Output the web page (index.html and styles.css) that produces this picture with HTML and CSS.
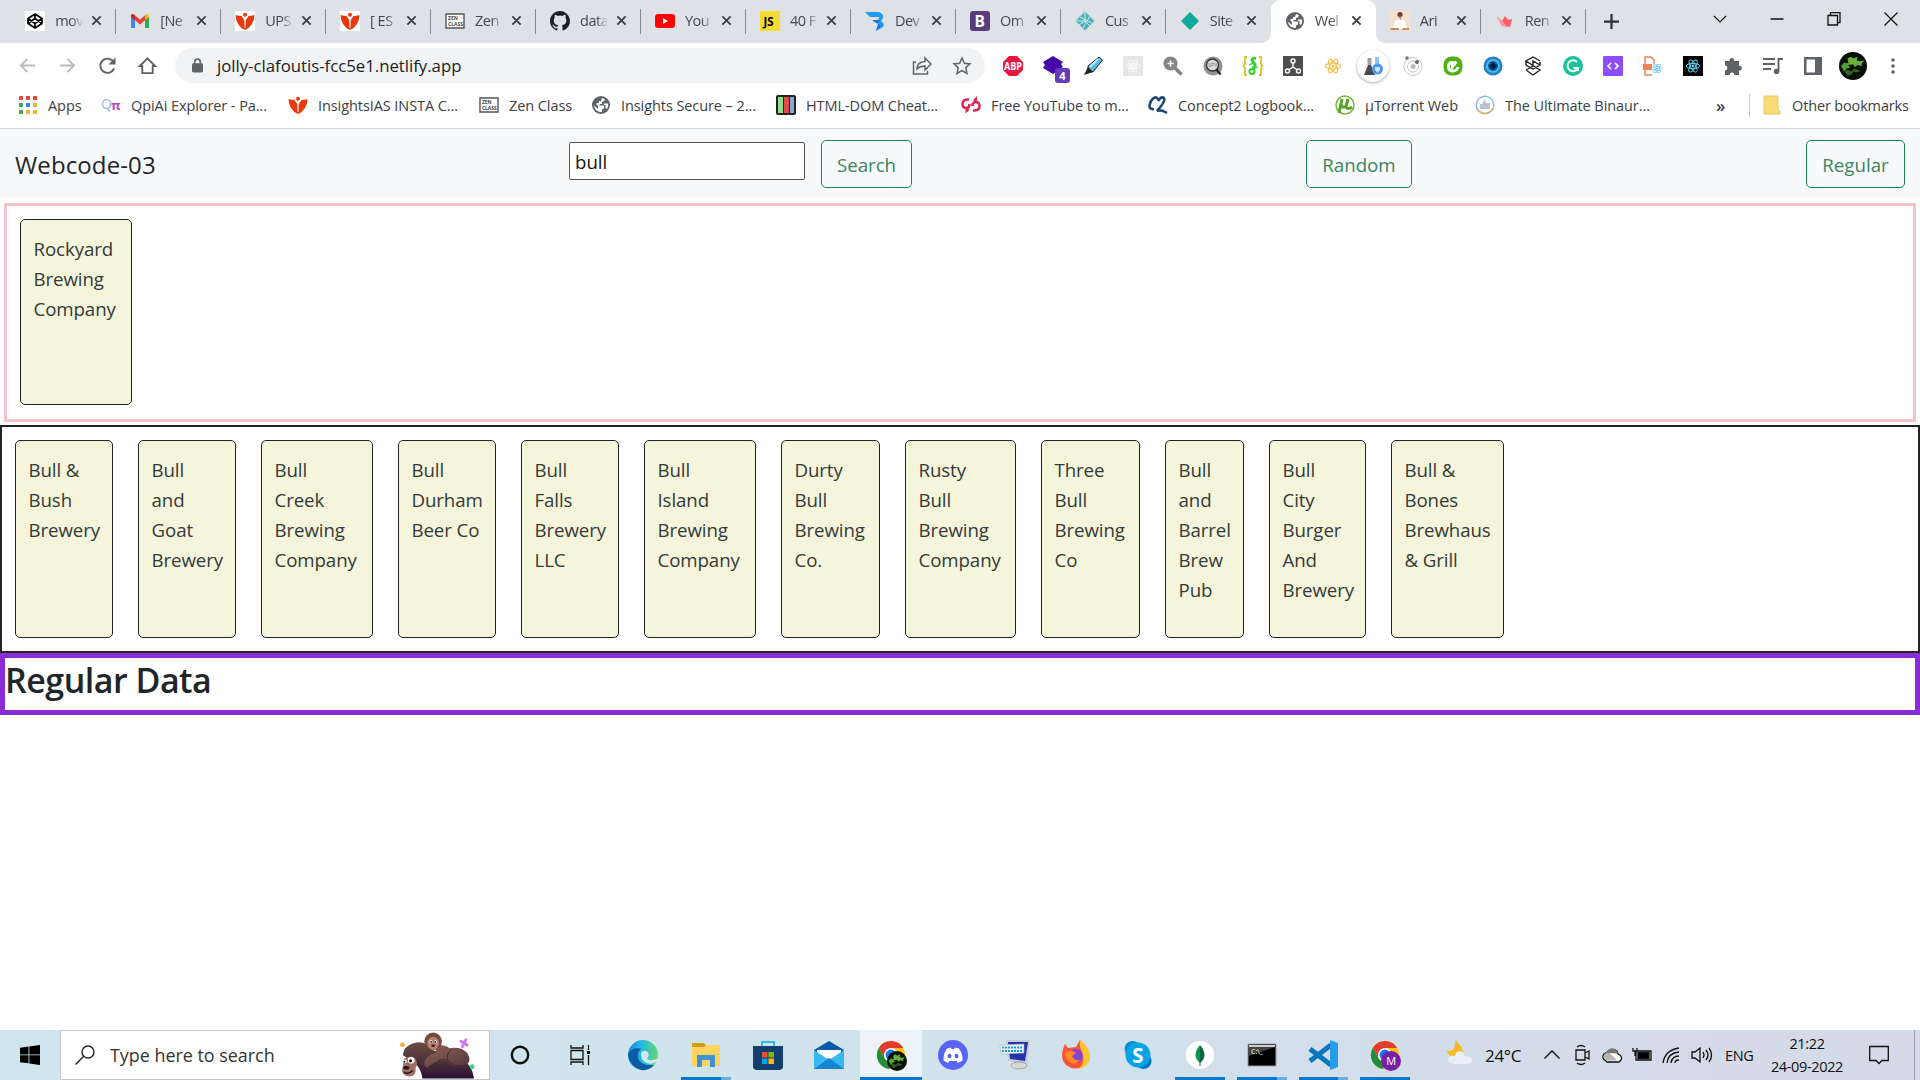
FILE: index.html
```html
<!DOCTYPE html>
<html lang="en">
<head>
<meta charset="utf-8">
<title>Webcode-03</title>
<link rel="stylesheet" href="styles.css">
</head>
<body>
<svg class="defs" aria-hidden="true">
  <defs>
    <symbol id="book" viewBox="0 0 20 20"><path fill="#e8380d" d="M.5 4q3 1 6 1l3 4.500L10 19Q1 15 .5 4zM19.500 4q-3 1-6 1l-3 4.500L10 19Q19 15 19.500 4z"/><circle cx="10" cy="3.800" r="2" fill="#e8380d"/><path stroke="#fff" stroke-width=".8" d="M10 9v8"/></symbol>
    <symbol id="zen" viewBox="0 0 20 20"><path fill="#fff" stroke="#555" stroke-width="1.400" d="M1 3h18v14H1z"/><text x="3" y="9.200" font-size="5" font-weight="700" fill="#444">ZEN</text><text x="3" y="14.500" font-size="5" font-weight="700" fill="#444">CLASS</text></symbol>
    <symbol id="globe" viewBox="0 0 20 20"><circle cx="10" cy="10" r="9" fill="#5f6368"/><path fill="#fff" d="M11 3q2 0 3 1.500-1 2.500-3 2.500v2H8.500v1.500h4.500v3l-2 1v2.500Q4 17.500 3 10.500l4 3.500v-3L5.500 9.500V8H8V6h2zM17 8.500q1 3-1 5.500l-1.500-1V10H13V8.500z"/></symbol>
    <symbol id="atom" viewBox="0 0 20 20"><g fill="none" stroke="currentColor" stroke-width="1.200"><ellipse cx="10" cy="10" rx="8.500" ry="3.300"/><ellipse cx="10" cy="10" rx="8.500" ry="3.300" transform="rotate(60 10 10)"/><ellipse cx="10" cy="10" rx="8.500" ry="3.300" transform="rotate(120 10 10)"/></g><circle cx="10" cy="10" r="1.800" fill="currentColor"/></symbol>
    <symbol id="chrome" viewBox="0 0 32 32"><circle cx="16" cy="16" r="15" fill="#fbc116"/><path fill="#e33b2e" d="M3 8.500A15 15 0 0 1 29 8.500H16L9.500 20z"/><path fill="#1e8e3e" d="M3 8.500L9.500 20l6.500 3.500L14 31A15 15 0 0 1 3 8.500z"/><circle cx="16" cy="16" r="7.500" fill="#fff"/><circle cx="16" cy="16" r="5.800" fill="#1a73e8"/></symbol>
    <symbol id="leafy" viewBox="0 0 30 30"><circle cx="15" cy="15" r="15" fill="#061006"/><path fill="#69ad3c" d="M9 7l4-2 2 2 5-2-1 4 4 1 4-1-3 4 1 2-5-1-3 2-2-3-4 1-1-3z"/><path fill="#5a9c34" d="M2 15l4-4 2 1 4-1-2 4 3 1-5 2-3 3-1-3z"/><path fill="#2d6620" d="M5 20l5-1 3 2 3-3 4 1 3 1-4 2-3-1-3 3-4 2-1-3z"/></symbol>
    <symbol id="x" viewBox="0 0 12 12"><path stroke="#3c4043" stroke-width="2" d="M1.500 1.500l9 9M10.500 1.500l-9 9"/></symbol>
  </defs>
</svg>

<header class="chrome">
  <div class="tabstrip">
    <div class="tab"><svg class="ic" viewBox="0 0 20 20"><path fill="#fff" d="M0 0h20v20H0z"/><path fill="none" stroke="#000" stroke-width="1.700" stroke-linejoin="round" d="M10 3l7 4.500v5L10 17l-7-4.500v-5zM10 3v4.500M10 17v-4.500M3 7.500l7 5 7-5M3 12.500l7-5 7 5"/></svg><span>mov</span><svg class="x"><use href="#x"/></svg></div>
    <div class="tab"><svg class="ic" viewBox="0 0 20 20"><path fill="#4285f4" d="M1 5l4 3v9H2q-1 0-1-1z"/><path fill="#34a853" d="M19 5l-4 3v9h3q1 0 1-1z"/><path fill="#ea4335" d="M4 3.500l6 5 6-5v5l-6 5-6-5z"/><path fill="#c5221f" d="M1 5q0-3 3-1.500l1 1V9L1 6z"/><path fill="#fbbc04" d="M19 5q0-3-3-1.500l-1 1V9l4-3z"/></svg><span>[Ne</span><svg class="x"><use href="#x"/></svg></div>
    <div class="tab"><svg class="ic white"><use href="#book"/></svg><span>UPS</span><svg class="x"><use href="#x"/></svg></div>
    <div class="tab"><svg class="ic white"><use href="#book"/></svg><span>[ ES</span><svg class="x"><use href="#x"/></svg></div>
    <div class="tab"><svg class="ic"><use href="#zen"/></svg><span>Zen</span><svg class="x"><use href="#x"/></svg></div>
    <div class="tab"><svg class="ic" viewBox="0 0 16 16"><path fill="#1b1f23" d="M8 0C3.600 0 0 3.600 0 8c0 3.500 2.300 6.500 5.500 7.600.4.100.5-.2.500-.4v-1.500c-2 .4-2.700-.5-2.900-1-.1-.2-.5-1-.9-1.200-.3-.2-.7-.6 0-.6s1.200.6 1.400.8c.8 1.300 2 1 2.500.7.100-.5.300-.9.500-1.100C4.800 11.100 3 10.400 3 7.400c0-.9.300-1.600.8-2.200-.1-.2-.4-1 .1-2.100 0 0 .7-.2 2.200.8a7.400 7.400 0 0 1 4 0c1.500-1 2.200-.8 2.200-.8.400 1.100.1 1.900 0 2.100.5.600.8 1.300.8 2.200 0 3-1.900 3.700-3.600 3.900.3.300.5.800.5 1.500v2.400c0 .2.100.5.500.4A8 8 0 0 0 8 0z"/></svg><span>data</span><svg class="x"><use href="#x"/></svg></div>
    <div class="tab"><svg class="ic" viewBox="0 0 20 20"><rect y="3" width="20" height="14" rx="3" fill="#f00"/><path fill="#fff" d="M8 7l5 3-5 3z"/></svg><span>You</span><svg class="x"><use href="#x"/></svg></div>
    <div class="tab"><svg class="ic" viewBox="0 0 20 20"><path fill="#f4dc34" d="M0 0h20v20H0z"/><text x="3.500" y="14.500" font-size="11.500" font-weight="700">JS</text></svg><span>40 F</span><svg class="x"><use href="#x"/></svg></div>
    <div class="tab"><svg class="ic" viewBox="0 0 20 20"><path fill="#1e9df0" d="M0 1h14q5 2 4 6l-2 3q4 2 2 6l-7 4 3-8-6-1 6-3V6H5z"/><path fill="#1273d6" d="M7 9h8l-2 3 3 3-5 5 2-7z"/></svg><span>Dev</span><svg class="x"><use href="#x"/></svg></div>
    <div class="tab"><svg class="ic" viewBox="0 0 20 20"><rect width="20" height="20" rx="3" fill="#563d7c"/><text x="4.500" y="15.500" font-size="15.500" font-weight="700" fill="#fff">B</text></svg><span>Om</span><svg class="x"><use href="#x"/></svg></div>
    <div class="tab"><svg class="ic" viewBox="0 0 20 20"><path fill="#4fb1b8" d="M10 .5l9.500 9.500-9.500 9.500L.5 10z"/><path stroke="#cfecee" fill="none" d="M5 6l12 6M10 1v9l-6 4M15 5l-7 12M1 10h9l5 5"/></svg><span>Cus</span><svg class="x"><use href="#x"/></svg></div>
    <div class="tab last"><svg class="ic" viewBox="0 0 20 20"><path fill="#0caa9c" d="M10 1l9 9-9 9-9-9z"/></svg><span>Site</span><svg class="x"><use href="#x"/></svg></div>
    <div class="tab active"><svg class="ic"><use href="#globe"/></svg><span>Wel</span><svg class="x"><use href="#x"/></svg></div>
    <div class="tab"><svg class="ic" viewBox="0 0 20 20"><path fill="#f4e0cd" d="M0 0h20v20H0z"/><circle cx="10" cy="3.500" r="2.600" fill="#6e4232"/><path fill="#fff" d="M3 18l2-8q5-4 10 0l2 8z"/><path fill="#c38c62" d="M8.500 5.500h3l-1 4zM1 17h8v2H0zM13 17h6v2h-7z"/></svg><span>Ari</span><svg class="x"><use href="#x"/></svg></div>
    <div class="tab"><svg class="ic" viewBox="0 0 20 20"><path fill="#ff5a65" d="M2 6l5 4 3-5 3 4 4-1-2 8-8-1z"/><path fill="#ff929a" d="M2 6l5 4 6 6-6-1z"/></svg><span>Ren</span><svg class="x"><use href="#x"/></svg></div>
    <svg class="plus" viewBox="0 0 16 16"><path stroke="#303236" stroke-width="2.400" d="M8 0v16M0 8h16"/></svg>
    <div class="wincontrols">
      <svg viewBox="0 0 16 16"><path d="M2 5l6 6 6-6"/></svg>
      <svg viewBox="0 0 16 16"><path d="M1.500 8h13" stroke-width="1.500"/></svg>
      <svg viewBox="0 0 16 16"><path d="M2 4.500h9.500V14H2zM4.500 4V1.700H14v10h-2.500" stroke-width="1.300"/></svg>
      <svg viewBox="0 0 16 16"><path d="M1.500 1.500l13 13M14.500 1.500l-13 13"/></svg>
    </div>
  </div>

  <div class="toolbar">
    <div class="nav">
      <svg class="dim" viewBox="0 0 20 20"><path d="M18 10H3M10 3l-7 7 7 7"/></svg>
      <svg class="dim" viewBox="0 0 20 20"><path d="M2 10h15M10 3l7 7-7 7"/></svg>
      <svg viewBox="0 0 20 20"><path d="M16.500 6.500A7.500 7.500 0 1 0 17 13"/><path fill="#5f6368" stroke="none" d="M18.500 1.500V9H11z"/></svg>
      <svg viewBox="0 0 20 20"><path d="M2 10.500L10 2.500l8 8h-2.500V18h-11v-7.500z"/></svg>
    </div>
    <div class="omnibox">
      <svg class="lock" viewBox="0 0 12 16"><rect y="5.500" width="12" height="10" rx="1.500" fill="#5f6368"/><path d="M3 6V4a3 3 0 0 1 6 0v2" fill="none" stroke="#5f6368" stroke-width="1.800"/></svg>
      <span class="url">jolly-clafoutis-fcc5e1.netlify.app</span>
      <svg class="obi" viewBox="0 0 20 20"><path d="M4 6H1.500v12h14v-3M5 13q0-7 8-7.500V2l6 6-6 6v-4q-5 0-8 3z"/></svg>
      <svg class="obi" viewBox="0 0 20 20"><path d="M10 2l2.400 5.300 5.600.6-4.200 3.900 1.200 5.700-5-2.900-5 2.900 1.200-5.700L2 7.900l5.600-.6z"/></svg>
    </div>
    <div class="exts">
      <svg viewBox="0 0 20 20"><path fill="#e8173f" d="M6 0h8l6 6v8l-6 6H6l-6-6V6z"/><text x="1" y="14" font-size="10.500" font-weight="700" fill="#fff" textLength="18" lengthAdjust="spacingAndGlyphs">ABP</text></svg>
      <div class="badged"><svg viewBox="0 0 20 20"><path fill="#4507a8" d="M10 0l10 6-2 2 2 3-10 7-10-6 2-3-2-3z"/></svg><b>4</b></div>
      <svg viewBox="0 0 20 20"><path fill="#51bfe2" stroke="#222" d="M16 1l3.500 3L10 16l-5-1V10z"/><path fill="#222" d="M5 11l5 5-3 1-6 2 2-4z"/><path stroke="#b6ecfa" stroke-width="2" d="M7 11l8-8"/></svg>
      <svg viewBox="0 0 20 20"><rect width="20" height="20" rx="1" fill="#e6e6e6"/><g color="#fafafa"><use href="#atom" x="2" y="2" width="16" height="16"/></g></svg>
      <svg viewBox="0 0 20 20"><circle cx="7.500" cy="7.500" r="7" fill="#858585"/><path stroke="#858585" stroke-width="3.500" d="M11 11l7.500 7.500"/><path stroke="#fff" stroke-width="1.500" d="M7.500 4.500v6M4.500 7.500h6"/></svg>
      <svg viewBox="0 0 20 20"><circle cx="10" cy="10" r="9.500" fill="#929292"/><circle cx="9.500" cy="9" r="6" fill="#ddd" stroke="#333" stroke-width="1.300"/><text x="5" y="11" font-size="5.500" fill="#777">SPY</text><path stroke="#222" stroke-width="2.200" d="M13.500 13.500l4 5"/></svg>
      <svg viewBox="0 0 20 20"><path fill="none" stroke="#d7c621" stroke-width="1.800" d="M4 1H2v7L.5 10 2 12v7h2M16 1h2v7l1.500 2-1.500 2v7h-2"/><path fill="none" stroke="#32d22d" stroke-width="3" d="M13 2.500q-4-1-4 2l3 4q1 3-3 4"/><circle cx="9" cy="15.500" r="2.500" fill="none" stroke="#32d22d" stroke-width="2"/><path stroke="#32d22d" stroke-width="1.300" d="M10 7L6 9M12 11l3 1"/></svg>
      <svg viewBox="0 0 20 20"><path fill="#4d4d4d" d="M0 0h20v20H0z"/><g fill="none" stroke="#fff" stroke-width="1.400"><circle cx="10" cy="5" r="2"/><circle cx="4.500" cy="15" r="2"/><circle cx="15.500" cy="15" r="2"/><path d="M10 7v4l-4.500 3M10 11l4.500 3"/></g></svg>
      <svg class="gold" viewBox="0 0 20 20"><use href="#atom" x="1" y="1" width="18" height="18"/></svg>
      <svg class="halo" viewBox="0 0 20 20"><path fill="#9aa0a5" d="M4.500 2h4v7h-4z"/><path fill="#474b50" d="M5 9h3l4 10H1z"/><path fill="#8cc4fa" d="M12 1h4v7h-4z"/><circle cx="14.500" cy="13" r="5.500" fill="#4b97ee"/><path fill="#c6e0ff" d="M12 11h5v3l-2.500 3-2.500-3z"/></svg>
      <svg viewBox="0 0 20 20"><g fill="none" stroke="#c5c5c5"><circle cx="10" cy="10.500" r="9"/><circle cx="10" cy="10.500" r="5.500"/></g><circle cx="10" cy="10.500" r="2.500" fill="#bcbcbc"/><circle cx="4" cy="2" r="1.800" fill="#777"/><circle cx="14" cy="6" r="2" fill="#666"/></svg>
      <svg viewBox="0 0 20 20"><rect x=".5" y=".5" width="19" height="19" rx="8" fill="#4eb111"/><path fill="none" stroke="#fff" stroke-width="3" d="M15 11q-1 4-5 4-4.500 0-4.500-4.500 0-4 4-4v4l4-5"/></svg>
      <svg viewBox="0 0 20 20"><circle cx="10" cy="10" r="9.500" fill="#1d82c7"/><circle cx="10" cy="10" r="7" fill="#55b5ec"/><circle cx="10" cy="10" r="5" fill="#0b5c9d"/><path fill="#031f42" d="M10 6l4 4-4 4-4-4z"/></svg>
      <svg viewBox="0 0 20 20"><path fill="none" stroke="#222" stroke-width="1.400" d="M17 5l-7-4-7 4 14 9-7 5-7-5M3 5v4l7 4 7-4V6M3 14l7-4V5l7 4"/></svg>
      <svg viewBox="0 0 20 20"><circle cx="10" cy="10" r="10" fill="#15c39a"/><path fill="none" stroke="#fff" stroke-width="2" d="M14 6a5.500 5.500 0 1 0 1 6h-4.500M15 11v4"/></svg>
      <svg viewBox="0 0 20 20"><rect width="20" height="20" rx="1" fill="#8c4dfb"/><path fill="none" stroke="#fff" stroke-width="1.700" d="M8 7l-3 3 3 3M12 7l3 3-3 3"/></svg>
      <svg viewBox="0 0 20 20"><path fill="none" stroke="#ef8452" stroke-width="1.500" d="M2 8V1h6l3 3v4M2 13v6h7"/><path fill="#ef8452" d="M0 8h9v6H0z"/><g color="#68bdec"><use href="#atom" x="8" y="6" width="12" height="13"/></g></svg>
      <svg viewBox="0 0 20 20"><path d="M0 0h20v20H0z"/><g color="#61dafb"><use href="#atom" x="2" y="2" width="16" height="16"/></g></svg>
      <svg viewBox="0 0 20 20"><path fill="#5f6368" d="M2 5h4.500a2.400 2.400 0 1 1 4.700 0H16v4.800a2.400 2.400 0 1 1 0 4.700V19h-4.600a2.400 2.400 0 0 0-4.800 0H2v-4.600a2.400 2.400 0 0 0 0-4.800z"/></svg>
      <svg viewBox="0 0 20 20"><path stroke="#5f6368" stroke-width="1.900" fill="none" d="M0 3h12M0 8h12M0 13h8M15.500 15V3H20"/><circle cx="13.500" cy="15.500" r="2.700" fill="#5f6368"/></svg>
      <svg viewBox="0 0 20 20"><path fill="#5f6368" d="M1 1h18v18H1z"/><path fill="#fff" d="M3.500 3.500H12v13H3.500z"/></svg>
      <svg class="avatar"><use href="#leafy"/></svg>
      <svg viewBox="0 0 20 20"><g fill="#5f6368"><circle cx="10" cy="4" r="1.800"/><circle cx="10" cy="10" r="1.800"/><circle cx="10" cy="16" r="1.800"/></g></svg>
    </div>
  </div>

  <div class="bookmarks">
    <a><svg viewBox="0 0 20 20"><g fill="#e64a3b"><path d="M1 1h4v4H1zM8 1h4v4H8zM15 1h4v4h-4z"/></g><path fill="#46a557" d="M1 8h4v4H1zM1 15h4v4H1z"/><path fill="#3b87ef" d="M8 8h4v4H8z"/><path fill="#efb52d" d="M15 8h4v4h-4zM8 15h4v4H8zM15 15h4v4h-4z"/></svg>Apps</a>
    <a><svg viewBox="0 0 20 20"><text y="14" font-size="14" fill="#9cb7d8">Q</text><text x="10" y="15" font-size="13" font-weight="700" fill="#b94bbd">π</text></svg>QpiAi Explorer - Pa...</a>
    <a><svg><use href="#book"/></svg>InsightsIAS INSTA C...</a>
    <a><svg><use href="#zen"/></svg>Zen Class</a>
    <a><svg><use href="#globe"/></svg>Insights Secure – 2...</a>
    <a><svg viewBox="0 0 20 20"><rect width="20" height="20" rx="2" fill="#222"/><path fill="#8ce48a" d="M2 2h5v16H2z"/><path fill="#e64949" d="M8 2h5v16H8z"/><path fill="#86a9d8" d="M14 2h4v16h-4z"/></svg>HTML-DOM Cheat...</a>
    <a><svg viewBox="0 0 20 20"><path fill="none" stroke="#d92b55" stroke-width="2.600" d="M8 4.500Q1.500 4 1.500 9q0 4 4 4 3 0 3-4M12 15.500q6.500.5 6.500-4.500 0-4-4-4-3 0-3 4"/><path fill="#d92b55" d="M12 5l4-4v7zM8.500 15l-4-3.500v7z"/></svg>Free YouTube to m...</a>
    <a><svg viewBox="0 0 20 20"><path fill="none" stroke="#204875" stroke-width="2.600" d="M10 4Q7 0 3 6q-4 9 3 8M10 6q3-5 6-3 2 3-7 13 4-2 10 2"/></svg>Concept2 Logbook...</a>
    <a><svg viewBox="0 0 20 20"><circle cx="10" cy="10" r="9" fill="#fff" stroke="#74b843" stroke-width="1.500"/><path fill="none" stroke="#55a527" stroke-width="3" d="M7 4L4 18M6 9q1 5 5 2l2-7-2 8q2 3 6 0"/></svg>µTorrent Web</a>
    <a><svg viewBox="0 0 20 20"><circle cx="10" cy="10" r="8.800" fill="#fff" stroke="#84bde6" stroke-width="1.500"/><path fill="none" stroke="#e5b66c" stroke-width="1.500" d="M3 15a8.800 8.800 0 0 0 15-2"/><path fill="#b8c5d1" d="M5 9h2l3-5 1 4h4v6H5z"/></svg>The Ultimate Binaur...</a>
    <span class="more">»</span>
    <a class="other"><svg viewBox="0 0 20 20"><path fill="#f7dc78" stroke="#e9c95e" d="M2 1h14v13l2 2v3H2z"/></svg>Other bookmarks</a>
  </div>
</header>

<main class="page">
  <nav class="navbar">
    <span class="brand">Webcode-03</span>
    <form class="search"><input type="text" value="bull"><button type="button" class="btn b-search">Search</button></form>
    <button type="button" class="btn b-random">Random</button>
    <button type="button" class="btn b-regular">Regular</button>
  </nav>
  <section class="random-box"><article class="card w112">Rockyard<br>Brewing<br>Company</article></section>
  <section class="search-box">
    <article class="card w98">Bull &amp;<br>Bush<br>Brewery</article>
    <article class="card w98">Bull<br>and<br>Goat<br>Brewery</article>
    <article class="card w112">Bull<br>Creek<br>Brewing<br>Company</article>
    <article class="card w98">Bull<br>Durham<br>Beer Co</article>
    <article class="card w98">Bull<br>Falls<br>Brewery<br>LLC</article>
    <article class="card w112">Bull<br>Island<br>Brewing<br>Company</article>
    <article class="card w99">Durty<br>Bull<br>Brewing<br>Co.</article>
    <article class="card w111">Rusty<br>Bull<br>Brewing<br>Company</article>
    <article class="card w99">Three<br>Bull<br>Brewing<br>Co</article>
    <article class="card w79">Bull<br>and<br>Barrel<br>Brew<br>Pub</article>
    <article class="card w97">Bull<br>City<br>Burger<br>And<br>Brewery</article>
    <article class="card w113">Bull &amp;<br>Bones<br>Brewhaus<br>&amp; Grill</article>
  </section>
  <section class="regular-box"><h2>Regular Data</h2></section>
</main>

<footer class="taskbar">
  <div class="start"><svg viewBox="0 0 20 20"><path d="M0 2.700L8.500 1.500v8H0zM9.300 1.400L20 0v9.500H9.300zM0 10.300h8.500v8L0 17.200zM9.300 10.300H20V20L9.300 18.500z"/></svg></div>
  <div class="tsearch">
    <svg class="mag" viewBox="0 0 20 20"><circle cx="13" cy="7" r="6" fill="none" stroke="#222" stroke-width="1.400"/><path stroke="#222" stroke-width="1.400" d="M8.500 11.500L.5 19.500"/></svg>
    <span>Type here to search</span>
    <svg class="apes" viewBox="0 0 80 48">
      <defs>
        <linearGradient id="fur" x1="0" y1="0" x2="0" y2="1"><stop offset="0" stop-color="#6d4a42"/><stop offset=".55" stop-color="#4b3036"/><stop offset="1" stop-color="#2a1236"/></linearGradient>
        <linearGradient id="baby" x1="0" y1="0" x2="1" y2="1"><stop offset="0" stop-color="#8d6557"/><stop offset="1" stop-color="#54363c"/></linearGradient>
      </defs>
      <path fill="url(#fur)" d="M4 24Q5 13 20 11q10 0 14 8l30 8q11 7 13 21H24q-1-8-6-14z"/>
      <path fill="url(#baby)" d="M38 14q8-1 14 3 12-2 18 5 5 8-1 12-12 4-19-3-8-2-12 0-6 3-9 6-5-2-2-8 4-6 11-7z"/>
      <path fill="none" stroke="#41262f" stroke-width="1" d="M40 30q6-3 12 1 7 6 17 3M54 18q-6 5-4 11"/>
      <circle cx="35" cy="10" r="9" fill="#74493e"/>
      <ellipse cx="35" cy="12" rx="6" ry="6.500" fill="#b9806d"/>
      <circle cx="32.700" cy="10.500" r="1.500" fill="#fff"/><circle cx="37.300" cy="10.500" r="1.500" fill="#fff"/><circle cx="32.900" cy="10.500" r=".9"/><circle cx="37.100" cy="10.500" r=".9"/><ellipse cx="35" cy="14.500" rx="2" ry="1.200" fill="#3c2027"/>
      <path fill="#a07063" d="M5 28q7-5 12 0 3 5 0 9 1 9-6 9-7 0-8-6l1-5z"/>
      <circle cx="12.500" cy="29.500" r="3.400" fill="#fff"/><circle cx="11.800" cy="30" r="1.600"/><circle cx="6" cy="30.500" r="1.900" fill="#fff"/><circle cx="5.500" cy="31" r="1"/>
      <ellipse cx="7.500" cy="37" rx="3.300" ry="1.800" fill="#281318"/><path d="M5 41.500q5 3 9-1.500" fill="none" stroke="#251322" stroke-width="1.500"/>
      <circle cx="3.500" cy="13.500" r="2.400" fill="#f5ad2b"/><circle cx="75" cy="36" r="2.500" fill="#48d080"/><path d="M63.500 10l6.500 4M68.500 8.500l-3.500 7" stroke="#d07aeb" stroke-width="3" stroke-linecap="round"/>
    </svg>
  </div>
  <div class="apps">
    <div class="app"><svg class="s20" viewBox="0 0 20 20"><circle cx="10" cy="10" r="8.200" fill="none" stroke="#111" stroke-width="2.400"/></svg></div>
    <div class="app"><svg class="s20" viewBox="0 0 20 20"><path fill="none" stroke="#111" stroke-width="1.300" d="M1 0v3h12V0M1 5.500h12v9H1zM1 20v-3h12v3M18.500 0v5M18.500 10v10"/><path d="M17 6h3v3h-3z"/></svg></div>
    <div class="app"><svg class="s30" viewBox="0 0 30 30"><defs><linearGradient id="edge"><stop offset="0" stop-color="#1289d8"/><stop offset=".5" stop-color="#2bbde0"/><stop offset="1" stop-color="#62d968"/></linearGradient></defs><circle cx="15" cy="15" r="15" fill="url(#edge)"/><path fill="#0c59a4" d="M0 14q5-8 13-5-4 3-3 9 2 8 16 7-5 6-13 5Q2 27 0 14z"/><path fill="#d3e7ee" d="M13 14q1-4 5-3 5 2 1 8 5 3 11-1v3q-6 4-11 2-6-2-6-9z"/></svg></div>
    <div class="app run two"><svg class="s30" viewBox="0 0 30 30"><path fill="#d99a16" d="M1 3h12l2 3v5H1z"/><path fill="#ffd35e" d="M1 7h12l3-2h13v21H1z"/><path fill="#3f93d5" d="M6 15h18v12h-5v-7h-8v7H6z"/></svg></div>
    <div class="app"><svg class="s30" viewBox="0 0 30 30"><path fill="none" stroke="#35b8f0" stroke-width="2" d="M9 7V2h12v5"/><path fill="#123f70" d="M0 6h30v20q0 4-4 4H4q-4 0-4-4z"/><path fill="#f25022" d="M9 12h5.500v5.500H9z"/><path fill="#7fba00" d="M15.500 12H21v5.500h-5.500z"/><path fill="#00a4ef" d="M9 18.500h5.500V24H9z"/><path fill="#ffb900" d="M15.500 18.500H21V24h-5.500z"/></svg></div>
    <div class="app"><svg class="s30" viewBox="0 0 30 30"><path fill="#075aa9" d="M0 10L15 1l15 9v5H0z"/><path fill="#fff" d="M3 10h24v8H3z"/><path fill="#36b9ef" d="M0 10l15 10 15-10v19H0z"/><path fill="#1684d1" d="M0 29l15-11 15 11z"/></svg></div>
    <div class="app run current"><div class="badged"><svg class="s30"><use href="#chrome"/></svg><svg class="mini"><use href="#leafy"/></svg></div></div>
    <div class="app"><svg class="s30" viewBox="0 0 30 30"><circle cx="15" cy="15" r="15" fill="#5865f2"/><path fill="#fff" d="M9 8.500l4-1 1 1.500h2l1-1.500 4 1q4 6 3.500 12L20 23l-1.500-2h-7L10 23l-4.500-2.500Q5 14 9 8.500z"/><ellipse cx="11.500" cy="16" rx="2" ry="2.300" fill="#5865f2"/><ellipse cx="18.500" cy="16" rx="2" ry="2.300" fill="#5865f2"/></svg></div>
    <div class="app"><svg class="s30" viewBox="0 0 30 30"><path fill="#c9ccd4" d="M6 0h24l-3 24-19-3z"/><path fill="#2433a8" d="M8 2h20l-3 19-15-2z"/><path fill="#f2f4f7" stroke="#9fb0c0" stroke-width=".6" d="M0 5l24-1v9L1 14z"/><path stroke="#1696d7" stroke-width="2" stroke-dasharray="2 1" d="M2 7.500h21M2 11h21"/><path fill="#bbb" d="M14 21h8v4h-8z"/><ellipse cx="19" cy="25.500" rx="8" ry="3.500" fill="#d7d7d7" stroke="#999" stroke-width=".8"/></svg></div>
    <div class="app"><svg class="s30" viewBox="0 0 30 30"><path fill="#ff5239" d="M2 9l2-5 3 4 8-1 4-7 7 8q6 12-2 17-10 7-19 0Q-1 19 2 9z"/><path fill="#ffc52c" d="M19 0q11 9 10 18-2 9-11 11 7-7 3-17-3-5-2-12z"/><circle cx="15" cy="16" r="7" fill="#8744cf"/><path fill="#ff8b25" d="M4 13q6-4 11 0l-4 3q2 5 8 4-5 6-11 2-4-4-4-9z"/></svg></div>
    <div class="app"><svg class="s30" viewBox="0 0 30 30"><circle cx="9.500" cy="9" r="8" fill="#0b8ed0"/><circle cx="20.500" cy="21" r="8" fill="#0078c8"/><circle cx="15" cy="15" r="12.500" fill="#07a4e4"/><text x="9" y="22.500" font-size="21" font-weight="700" fill="#fff">S</text></svg></div>
    <div class="app run"><svg class="s30" viewBox="0 0 30 30"><circle cx="15" cy="15" r="14" fill="#fff"/><path fill="#12924f" d="M15 5q-9 11 0 18z"/><path fill="#0a6540" d="M15 5q9 11 0 18z"/><path stroke="#075" d="M15 20v6"/></svg></div>
    <div class="app run two"><svg class="s30" viewBox="0 0 30 30"><path stroke="#999" d="M1 4h28v22H1z"/><path fill="#ccc" d="M2 5h26v2H2z"/><path fill="#444" d="M2 7h26L2 16z"/><text x="4" y="14" font-size="7" fill="#fff">C:\_</text></svg></div>
    <div class="app run two"><svg class="s30" viewBox="0 0 30 30"><path fill="none" stroke="#0876bd" stroke-width="5" d="M2 9l21 16M2 21L23 5"/><path fill="#269eeb" d="M22 0l8 3v24l-8 3z"/></svg></div>
    <div class="app run"><div class="badged"><svg class="s30"><use href="#chrome"/></svg><i class="m">M</i></div></div>
  </div>
  <div class="tray">
    <svg class="wx" viewBox="0 0 28 28"><path fill="#f8b927" d="M0 11q7 2 9-4l1-7 6 7 3 8-8 4Q4 18 0 11z"/><path fill="#e9f0fb" d="M6 24q-6-1-3-6 3-3 6-1 2-8 9-4l2 4q6-1 7 4 0 4-5 4H8z"/></svg>
    <span class="temp">24°C</span>
    <svg viewBox="0 0 20 20"><path d="M2.500 13.500L10 6l7.500 7.500"/></svg>
    <svg viewBox="0 0 20 20"><path d="M4 5h9v10H4zM13 8l4-2v8l-4-2M5 2q4-3 8 0M5 18q4 3 8 0"/></svg>
    <svg viewBox="0 0 20 20"><path fill="#fafafa" d="M4 16q-5-3-2-7 3-2 5-1 2-6 8-2l1 3q5 2 3 6l-2 2H5z"/><path fill="#777" stroke="none" d="M3 8.500q3-5 7-5 5 0 6 5L8 8z"/><path fill="#b5b5b5" stroke="none" d="M2 9.500q4-3 7 0l6 6H5q-5-2-3-6z"/></svg>
    <svg viewBox="0 0 20 20"><path d="M4 6h15v9H4zM1 3v3h4V3M3 6v5"/><path fill="#000" d="M6 7.500h11v6H6z"/></svg>
    <svg viewBox="0 0 20 20"><path d="M1 18Q3 5 17 3M5 18Q6 8 17 7M9 18q1-7 8-7M13 18q0-3 4-3"/></svg>
    <svg viewBox="0 0 20 20"><path d="M0 7h3l5-4v14l-5-4H0zM11 7q2 3 0 6M14 5q4 5 0 10M17 3q5 7 0 14"/></svg>
    <span class="eng">ENG</span>
    <div class="clock"><span>21:22</span><span>24-09-2022</span></div>
    <svg class="note" viewBox="0 0 20 20"><path d="M.7 1.500h18.600v14H13l-3 3-3-3H.7z"/></svg>
    <span class="peek"></span>
  </div>
</footer>
</body>
</html>
```

FILE: styles.css
```css
* { box-sizing: border-box; }
body {
  margin: 0;
  width: 1920px;
  height: 1080px;
  overflow: hidden;
  display: flex;
  flex-direction: column;
  background: #fff;
  color: #212529;
  font-family: "Open Sans", "Noto Sans", sans-serif;
}
svg { display: block; flex: none; overflow: visible; }
.defs { position: absolute; width: 0; height: 0; }

/* Browser window */
.chrome { flex: none; height: 129px; border-bottom: 1px solid #d5d8dc; }
.tabstrip { height: 43px; background: #dee1e6; display: flex; padding-left: 11.2px; }
.tab {
  flex: none;
  width: 104.97px;
  height: 43px;
  padding: 0 14px 2px;
  display: flex;
  align-items: center;
  position: relative;
  font-size: 14.5px;
  color: #45494d;
}
.tab::after { content: ""; position: absolute; right: 0; top: 9px; width: 1px; height: 25px; background: #85898e; }
.tab.last::after { display: none; }
.tab .ic { width: 20px; height: 20px; }
.tab .ic.white { background: #fff; }
.tab span {
  width: 27px;
  margin-left: 10px;
  overflow: hidden;
  white-space: nowrap;
  letter-spacing: -0.5px;
  -webkit-mask-image: linear-gradient(90deg, #000 60%, rgba(0, 0, 0, 0.15));
  mask-image: linear-gradient(90deg, #000 60%, rgba(0, 0, 0, 0.15));
}
.tab .x { width: 11px; height: 11px; margin-left: 9px; }
.tab.active { background: #fff; border-radius: 9px 9px 0 0; }
/* Concave corners where the active tab meets the toolbar */
.tab.active::before,
.tab.active::after { content: ""; position: absolute; top: auto; bottom: 0; width: 9px; height: 9px; }
.tab.active::before { left: -9px; background: radial-gradient(circle at 0 0, #dee1e6 8.5px, #fff 9px); }
.tab.active::after { right: -9px; background: radial-gradient(circle at 100% 0, #dee1e6 8.5px, #fff 9px); }
.plus { width: 15px; height: 15px; margin: 14px 0 0 18px; }
.wincontrols { margin-left: auto; display: flex; gap: 41px; padding: 11px 21px 0 0; }
.wincontrols svg { width: 16px; height: 16px; fill: none; stroke: #111; stroke-width: 1.2; }

.toolbar { height: 45px; display: flex; align-items: center; }
.nav { width: 175px; padding-left: 18px; display: flex; gap: 21px; }
.nav svg { width: 19px; height: 19px; fill: none; stroke: #5f6368; stroke-width: 2; }
.nav .dim { stroke: #babcbe; }
.omnibox {
  width: 810px;
  height: 35px;
  border-radius: 18px;
  background: #f1f3f4;
  display: flex;
  align-items: center;
  padding: 0 13px 0 17px;
}
.lock { width: 11px; height: 15px; }
.url { flex: 1; margin-left: 14px; font-size: 16.8px; letter-spacing: -0.02px; color: #202124; }
.obi { width: 20px; height: 20px; margin-left: 20px; fill: none; stroke: #5f6368; stroke-width: 1.5; }
.exts { margin-left: 8px; display: grid; grid-template-columns: repeat(23, 40px); justify-items: center; align-items: center; width: 920px; }
.exts svg { width: 20px; height: 20px; }
.gold { color: #f3bf4b; }
.exts .halo { width: 32px; height: 32px; padding: 6px; border-radius: 50%; background: #fff; box-shadow: 0 1px 3px #aaa; }
.exts .avatar { width: 28px; height: 28px; }
.badged { position: relative; }
.badged b {
  position: absolute;
  left: 12px;
  top: 12px;
  width: 15px;
  height: 15px;
  border-radius: 3px;
  background: #673ab7;
  color: #fff;
  font-size: 11px;
  line-height: 15px;
  text-align: center;
}

.bookmarks {
  height: 36px;
  display: grid;
  grid-template-columns: 83px 187px 191px 112px 185px 185px 187px 187px 140px 246px 28px 1fr;
  align-items: center;
  padding: 0 0 2px 18px;
  font-size: 14.5px;
  letter-spacing: -0.08px;
  color: #3c4043;
  white-space: nowrap;
}
.bookmarks a { display: flex; align-items: center; gap: 10px; }
.bookmarks svg { width: 20px; height: 20px; }
.bookmarks .other { border-left: 1px solid #c5c8cb; padding-left: 12px; height: 23px; letter-spacing: -0.15px; }
.bookmarks .more { margin-left: -5px; font-size: 17px; font-weight: 600; }

/* Page */
.page { flex: 1; }
.navbar {
  height: 69px;
  background: #f8f9fa;
  display: flex;
  justify-content: space-between;
  align-items: flex-start;
  padding: 11px 15px 0;
}
.brand { width: 160px; font-size: 24px; line-height: 49px; letter-spacing: 0.12px; }
.search { display: flex; gap: 16px; }
.search input {
  width: 236px;
  height: 38px;
  margin-top: 2px;
  border: 1px solid #555;
  border-radius: 2px;
  padding: 0 5px;
  background: #fff;
  color: #111;
  font: 18.6px "Open Sans", sans-serif;
}
.btn {
  height: 48px;
  border: 1px solid #198754;
  border-radius: 5px;
  padding: 1px 0 0;
  background: transparent;
  color: #3b8661;
  font: 18.7px "Open Sans", sans-serif;
}
.b-search { width: 91px; }
.b-random { width: 106px; }
.b-regular { width: 99px; }
.random-box {
  height: 219px;
  margin: 5px 4px 3px;
  border: 3px solid #f5c2cd;
  padding: 13px 13px 14px;
  display: flex;
}
.search-box { height: 228px; border: 2px solid #212529; padding: 13px; display: flex; gap: 25px; }
.card {
  flex: none;
  border: 1px solid #212529;
  border-radius: 5px;
  background: #f5f5dc;
  padding: 14px 0 0 12.5px;
  font-size: 18.7px;
  line-height: 30px;
  letter-spacing: -0.1px;
  color: #343a38;
  white-space: nowrap;
}
.w79 { width: 79px; }
.w97 { width: 97px; }
.w98 { width: 98px; }
.w99 { width: 99px; }
.w111 { width: 111px; }
.w112 { width: 112px; }
.w113 { width: 113px; }
.regular-box { height: 62px; border: 5px solid #8a2bd8; }
.regular-box h2 { margin: 0; font-size: 34px; line-height: 45px; font-weight: 600; letter-spacing: -0.5px; }

/* Taskbar */
.taskbar { height: 50px; display: flex; background: linear-gradient(90deg, #cfe6ee 0%, #d0e3ed 45%, #d5dae9 90%); color: #111; }
.start { width: 60px; display: grid; place-items: center; }
.start svg { width: 20px; height: 20px; }
.tsearch {
  width: 430px;
  border: 1px solid #c5c8cb;
  background: #fff;
  display: flex;
  align-items: center;
  padding: 0 12px 0 14px;
  font-size: 17.9px;
  color: #333;
}
.tsearch span { flex: 1; margin-left: 15px; }
.mag { width: 20px; height: 20px; }
.apes { width: 78px; height: 48px; }
.apps { display: grid; grid-template-columns: 60px 60px 65px repeat(12, 61.75px); }
.app { display: grid; place-items: center; position: relative; }
.s20 { width: 20px; height: 20px; }
.s30 { width: 30px; height: 30px; }
.run::after { content: ""; position: absolute; left: 6px; right: 6px; bottom: 0; height: 3px; background: #0877cf; }
.run.two::after { background: linear-gradient(90deg, #0877cf 80%, #6eaddc 80%); }
.current { background: #ebf3f7; }
.current::after { left: 0; right: 0; }
.badged .mini { position: absolute; left: 11px; top: 11px; width: 20px; height: 20px; }
.badged .m {
  position: absolute;
  left: 11px;
  top: 11px;
  width: 20px;
  height: 20px;
  border-radius: 50%;
  background: #7b1fa2;
  color: #fff;
  font: 11px/20px "Open Sans", sans-serif;
  text-align: center;
}
.tray { flex: 1; display: flex; align-items: center; padding-left: 30px; }
.tray svg { width: 20px; height: 20px; margin-right: 10px; fill: none; stroke: #111; stroke-width: 1.3; }
.tray .wx { width: 27px; height: 27px; stroke: none; margin: 0 12px 4px 0; }
.temp { width: 57px; font-size: 17px; letter-spacing: -0.3px; }
.eng { width: 29px; font-size: 14.5px; letter-spacing: -0.4px; margin-left: 3px; }
.clock { width: 106px; display: flex; flex-direction: column; align-items: center; font-size: 14.5px; line-height: 23px; letter-spacing: -0.35px; }
.tray .note { margin: 0 0 0 9px; width: 20px; height: 22px; }
.peek { width: 1px; height: 50px; background: #9ba3b3; margin: 0 5px 0 auto; }
```
